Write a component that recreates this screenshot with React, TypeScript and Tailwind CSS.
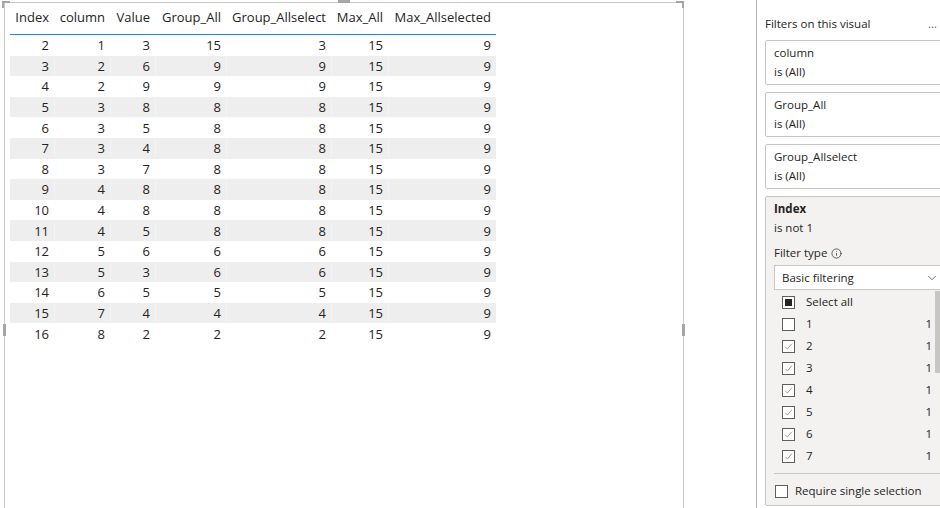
import { ChevronDown, Info } from "lucide-react";

const columns = [
  { name: "Index", w: "w-[44px]" },
  { name: "column", w: "w-[56px]" },
  { name: "Value", w: "w-[45px]" },
  { name: "Group_All", w: "w-[71px]" },
  { name: "Group_Allselect", w: "w-[105px]" },
  { name: "Max_All", w: "w-[57px]" },
  { name: "Max_Allselected", w: "w-[108px]" },
];

const rows = [
  [2, 1, 3, 15, 3, 15, 9],
  [3, 2, 6, 9, 9, 15, 9],
  [4, 2, 9, 9, 9, 15, 9],
  [5, 3, 8, 8, 8, 15, 9],
  [6, 3, 5, 8, 8, 15, 9],
  [7, 3, 4, 8, 8, 15, 9],
  [8, 3, 7, 8, 8, 15, 9],
  [9, 4, 8, 8, 8, 15, 9],
  [10, 4, 8, 8, 8, 15, 9],
  [11, 4, 5, 8, 8, 15, 9],
  [12, 5, 6, 6, 6, 15, 9],
  [13, 5, 3, 6, 6, 15, 9],
  [14, 6, 5, 5, 5, 15, 9],
  [15, 7, 4, 4, 4, 15, 9],
  [16, 8, 2, 2, 2, 15, 9],
];

const filterItems = ["1", "2", "3", "4", "5", "6", "7"];

const Checkbox = ({ state }: { state: "on" | "off" | "mixed" }) => (
  <div className="flex h-[13px] w-[13px] shrink-0 items-center justify-center border border-[#605e5c] bg-white">
    {state === "mixed" && <div className="h-[7px] w-[7px] bg-[#252423]" />}
    {state === "on" && (
      <svg width="9" height="9" viewBox="0 0 9 9" fill="none">
        <path d="M1.2 4.8 L3.4 7 L7.8 1.8" stroke="#a19f9d" strokeWidth="1" />
      </svg>
    )}
  </div>
);

const FilterCard = ({ title, value }: { title: string; value: string }) => (
  <div className="w-[185px] rounded-[2px] border border-[#c8c6c4] bg-white px-[8px] pt-[2px] pb-[3px] leading-[19px]">
    <div>{title}</div>
    <div>{value}</div>
  </div>
);

const App = () => {
  return (
    <div className="flex h-[508px] w-[940px] overflow-hidden bg-white font-['Open_Sans','Noto_Sans',sans-serif] text-[#252423]">
      <div className="relative w-[756px] shrink-0">
        {/* visual container */}
        <div className="ml-[4px] mt-[2px] h-[520px] w-[680px] border-l border-t border-r border-[#c8c8c8] pl-[5px] text-[13px]">
          <div className="flex h-[32px] w-[486px] items-end border-b border-[#118dff] pb-[8px] leading-[18px]">
            {columns.map((c) => (
              <div key={c.name} className={`${c.w} shrink-0 whitespace-nowrap pr-[5px] text-right`}>
                {c.name}
              </div>
            ))}
          </div>
          {rows.map((r, i) => (
            <div
              key={i}
              className={`flex h-[20.6px] w-[486px] items-center leading-[18px] ${
                i % 2 === 1 ? "bg-[#eeeeee]" : "bg-white"
              }`}
            >
              {r.map((v, j) => (
                <div
                  key={j}
                  className={`${columns[j].w} shrink-0 pr-[5px] text-right ${
                    i % 2 === 1 && j > 0 ? "border-l border-[#f4f4f4]" : ""
                  }`}
                >
                  {v}
                </div>
              ))}
            </div>
          ))}
        </div>

        {/* resize handles */}
        <div className="absolute left-[2px] top-[1px] h-[2px] w-[8px] bg-[#a6a6a6]" />
        <div className="absolute left-[2px] top-[1px] h-[7px] w-[2px] bg-[#a6a6a6]" />
        <div className="absolute left-[676px] top-[1px] h-[2px] w-[8px] bg-[#a6a6a6]" />
        <div className="absolute left-[682px] top-[1px] h-[7px] w-[2px] bg-[#a6a6a6]" />
        <div className="absolute left-[338px] top-0 h-[3px] w-[12px] bg-[#a6a6a6]" />
        <div className="absolute left-[3px] top-[324px] h-[12px] w-[3px] bg-[#a6a6a6]" />
        <div className="absolute left-[682px] top-[324px] h-[12px] w-[3px] bg-[#a6a6a6]" />
      </div>

      {/* filter pane */}
      <div className="w-[184px] shrink-0 border-l border-[#b3b3b3] pl-[8px] pt-[16px] text-[11.5px]">
        <div className="flex w-[172px] items-center justify-between leading-[16px]">
          <span>Filters on this visual</span>
          <span className="text-[#605e5c]">…</span>
        </div>
        <div className="mt-[8px] flex flex-col gap-[7px]">
          <FilterCard title="column" value="is (All)" />
          <FilterCard title="Group_All" value="is (All)" />
          <FilterCard title="Group_Allselect" value="is (All)" />

          <div className="w-[185px] rounded-[2px] border border-[#c8c6c4] bg-[#f3f2f1] px-[8px] pt-[2px] pb-[6px]">
            <div className="font-bold leading-[19px]">Index</div>
            <div className="leading-[19px]">is not 1</div>
            <div className="mt-[7px] flex items-center gap-[4px] leading-[18px]">
              <span>Filter type</span>
              <Info size={11} strokeWidth={1.5} className="text-[#252423]" />
            </div>
            <div className="mt-[3px] flex h-[25px] w-[172px] items-center justify-between border border-[#c8c6c4] bg-white pl-[7px] pr-[6px]">
              <span>Basic filtering</span>
              <ChevronDown size={14} strokeWidth={1.5} className="text-[#605e5c]" />
            </div>
            <div className="flex w-[166px] pt-[1px]">
              <div className="flex-1">
                <div className="flex h-[22px] items-center pl-[8px]">
                  <Checkbox state="mixed" />
                  <span className="ml-[11px]">Select all</span>
                </div>
                {filterItems.map((it) => (
                  <div key={it} className="flex h-[22px] items-center pl-[8px] pr-[3px]">
                    <Checkbox state={it === "1" ? "off" : "on"} />
                    <span className="ml-[11px] flex-1">{it}</span>
                    <span>1</span>
                  </div>
                ))}
              </div>
              <div className="w-[5px] shrink-0">
                <div className="h-[82px] w-[5px] bg-[#c8c6c4]" />
              </div>
            </div>
            <div className="mt-[6px] border-t border-[#c8c6c4] pt-[9px]">
              <div className="flex items-center leading-[16px]">
                <div className="ml-[1px]">
                  <Checkbox state="off" />
                </div>
                <span className="ml-[7px]">Require single selection</span>
              </div>
            </div>
          </div>
        </div>
      </div>
    </div>
  );
};

export default App;
